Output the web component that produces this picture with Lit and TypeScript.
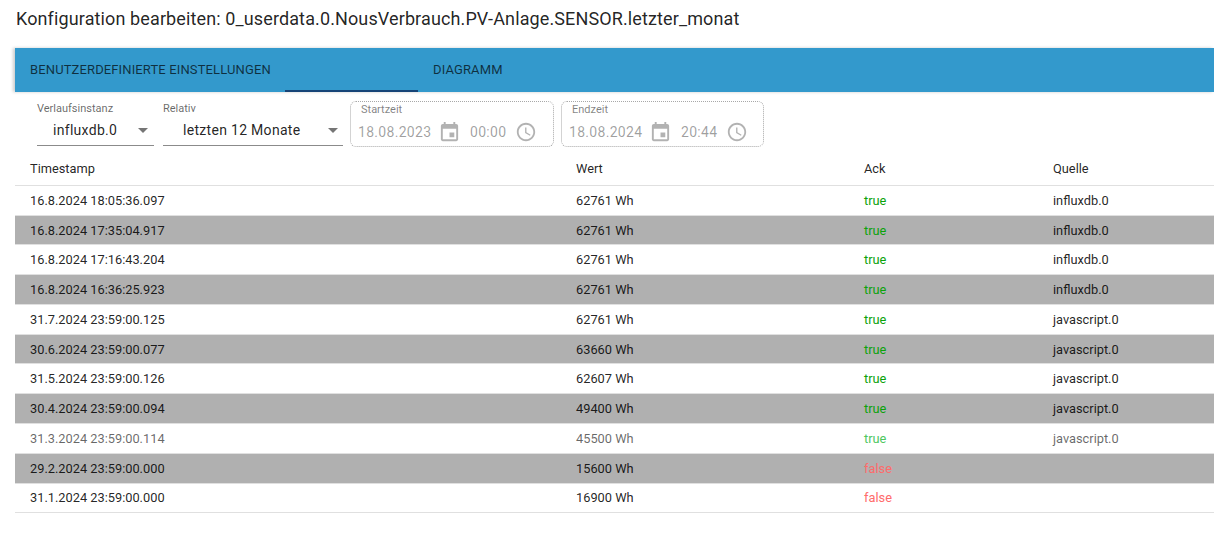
import { LitElement, html, css, svg } from "lit";
import { customElement } from "lit/decorators.js";

const rows: [string, string, boolean, string, boolean?][] = [
  ["16.8.2024 18:05:36.097", "62761 Wh", true, "influxdb.0"],
  ["16.8.2024 17:35:04.917", "62761 Wh", true, "influxdb.0"],
  ["16.8.2024 17:16:43.204", "62761 Wh", true, "influxdb.0"],
  ["16.8.2024 16:36:25.923", "62761 Wh", true, "influxdb.0"],
  ["31.7.2024 23:59:00.125", "62761 Wh", true, "javascript.0"],
  ["30.6.2024 23:59:00.077", "63660 Wh", true, "javascript.0"],
  ["31.5.2024 23:59:00.126", "62607 Wh", true, "javascript.0"],
  ["30.4.2024 23:59:00.094", "49400 Wh", true, "javascript.0"],
  ["31.3.2024 23:59:00.114", "45500 Wh", true, "javascript.0", true],
  ["29.2.2024 23:59:00.000", "15600 Wh", false, ""],
  ["31.1.2024 23:59:00.000", "16900 Wh", false, ""],
];

const calIcon = svg`<svg class="ico" viewBox="0 0 24 24" width="23" height="23"><path fill="currentColor" d="M17 12h-5v5h5v-5zM16 1v2H8V1H6v2H5c-1.11 0-1.99.9-1.99 2L3 19c0 1.1.89 2 2 2h14c1.1 0 2-.9 2-2V5c0-1.1-.9-2-2-2h-1V1h-2zm3 18H5V8h14v11z"/></svg>`;
const clockIcon = svg`<svg class="ico" viewBox="0 0 24 24" width="22" height="22"><path fill="currentColor" d="M11.99 2C6.47 2 2 6.48 2 12s4.47 10 9.99 10C17.52 22 22 17.52 22 12S17.52 2 11.99 2zM12 20c-4.42 0-8-3.58-8-8s3.58-8 8-8 8 3.58 8 8-3.58 8-8 8zm.5-13H11v6l5.25 3.15.75-1.23-4.5-2.67z"/></svg>`;
const arrow = svg`<svg class="arrow" viewBox="0 0 10 5" width="10" height="5"><path fill="currentColor" d="M0 0l5 5 5-5z"/></svg>`;

@customElement("app-root")
export class AppRoot extends LitElement {
  static styles = css`
    :host {
      display: block;
      width: 1214px;
      height: 548px;
      overflow: hidden;
      background: #fff;
      font-family: Roboto, "Liberation Sans", sans-serif;
      color: rgba(0, 0, 0, 0.87);
    }
    .title {
      height: 48px;
      box-sizing: border-box;
      padding: 7px 0 0 16px;
      font-size: 18px;
      line-height: 24px;
      letter-spacing: 0.12px;
    }
    .panel { margin-left: 15px; }
    .tabs {
      height: 44px;
      background: #3399cc;
      display: flex;
      box-shadow: -2px 0 3px rgba(0,0,0,.2);
      position: relative;
      font-size: 13px;
      font-weight: 400;
      letter-spacing: 0.125px;
      color: rgba(0, 0, 0, 0.7);
    }
    .tab {
      display: flex;
      align-items: center;
      box-sizing: border-box;
      padding-bottom: 1px;
      white-space: nowrap;
    }
    .tab.one { width: 270px; padding-left: 15px; }
    .tab.ind { width: 133px; border-bottom: 2px solid #164477; }
    .tab.two { padding-left: 15px; }
    .filters {
      display: flex;
      height: 60px;
      box-sizing: border-box;
      padding: 9px 0 0 22px;
    }
    .select { display: flex; flex-direction: column; height: 45px; box-sizing: border-box; border-bottom: 1px solid #8b8b8b; padding-top: 1px; }
    .select.a { width: 117px; margin-right: 9px; }
    .select.b { width: 180px; margin-right: 7px; }
    .select label { font-size: 11px; line-height: 14px; color: rgba(0,0,0,.6); height: 13px; }
    .select .val {
      display: flex;
      align-items: center;
      justify-content: space-between;
      font-size: 14px;
      letter-spacing: 0.3px;
      line-height: 20px;
      margin-top: 5px;
    }
    .select.a .val { padding: 0 6px 0 16px; }
    .select.b .val { padding: 0 5px 0 20px; }
    .arrow { color: rgba(0,0,0,.54); }
    .range {
      width: 204px;
      height: 46px;
      box-sizing: border-box;
      border: 1px dotted #a8a8a8;
      border-radius: 6px;
      margin-right: 7px;
      padding: 1px 0 0 7px;
      color: rgba(0,0,0,.38);
    }
    .range + .range { width: 203px; }
    .range .lbl { font-size: 11px; line-height: 14px; padding-left: 3px; color: rgba(0,0,0,.5); height: 13px; }
    .range .line { display: flex; align-items: center; font-size: 14px; letter-spacing: 0.3px; line-height: 24px; margin-top: 4px; }
    .d { width: 80px; }
    .t { width: 45px; margin-left: 9px; }
    .ico { display: block; color: rgba(0,0,0,.3); flex: none; }
    table {
      width: 1199px;
      border-collapse: collapse;
      table-layout: fixed;
      font-size: 12.8px;
    }
    th, td {
      padding: 0 15px;
      text-align: left;
      font-weight: 400;
      border-bottom: 1px solid #e0e0e0;
      box-sizing: border-box;
      white-space: nowrap;
    }
    th { height: 33.4px; }
    td { height: 29.77px; }
    tr.odd td { background: #b0b0b0; }
    tr.dim td { color: rgba(0,0,0,.6); }
    td.true { color: #0ba20b; }
    td.false { color: #ff6b6b; }
    tr.dim td.true { color: #4fc75f; }
  `;

  render() {
    return html`
      <div class="title">Konfiguration bearbeiten: 0_userdata.0.NousVerbrauch.PV-Anlage.SENSOR.letzter_monat</div>
      <div class="panel">
        <div class="tabs">
          <div class="tab one">BENUTZERDEFINIERTE EINSTELLUNGEN</div>
          <div class="tab ind"></div>
          <div class="tab two">DIAGRAMM</div>
        </div>
        <div class="filters">
          <div class="select a">
            <label>Verlaufsinstanz</label>
            <div class="val"><span>influxdb.0</span>${arrow}</div>
          </div>
          <div class="select b">
            <label>Relativ</label>
            <div class="val"><span>letzten 12 Monate</span>${arrow}</div>
          </div>
          ${this.range("Startzeit", "18.08.2023", "00:00")}
          ${this.range("Endzeit", "18.08.2024", "20:44")}
        </div>
        <table>
          <colgroup>
            <col style="width:546px" /><col style="width:288px" /><col style="width:189px" /><col style="width:176px" />
          </colgroup>
          <thead>
            <tr><th>Timestamp</th><th>Wert</th><th>Ack</th><th>Quelle</th></tr>
          </thead>
          <tbody>
            ${rows.map(
              (r, i) => html`<tr class="${i % 2 ? "odd" : ""} ${r[4] ? "dim" : ""}">
                <td>${r[0]}</td>
                <td>${r[1]}</td>
                <td class=${r[2] ? "true" : "false"}>${r[2] ? "true" : "false"}</td>
                <td>${r[3]}</td>
              </tr>`
            )}
          </tbody>
        </table>
      </div>
    `;
  }

  private range(label: string, date: string, time: string) {
    return html`<div class="range">
      <div class="lbl">${label}</div>
      <div class="line">
        <span class="d">${date}</span>${calIcon}
        <span class="t">${time}</span>${clockIcon}
      </div>
    </div>`;
  }
}
